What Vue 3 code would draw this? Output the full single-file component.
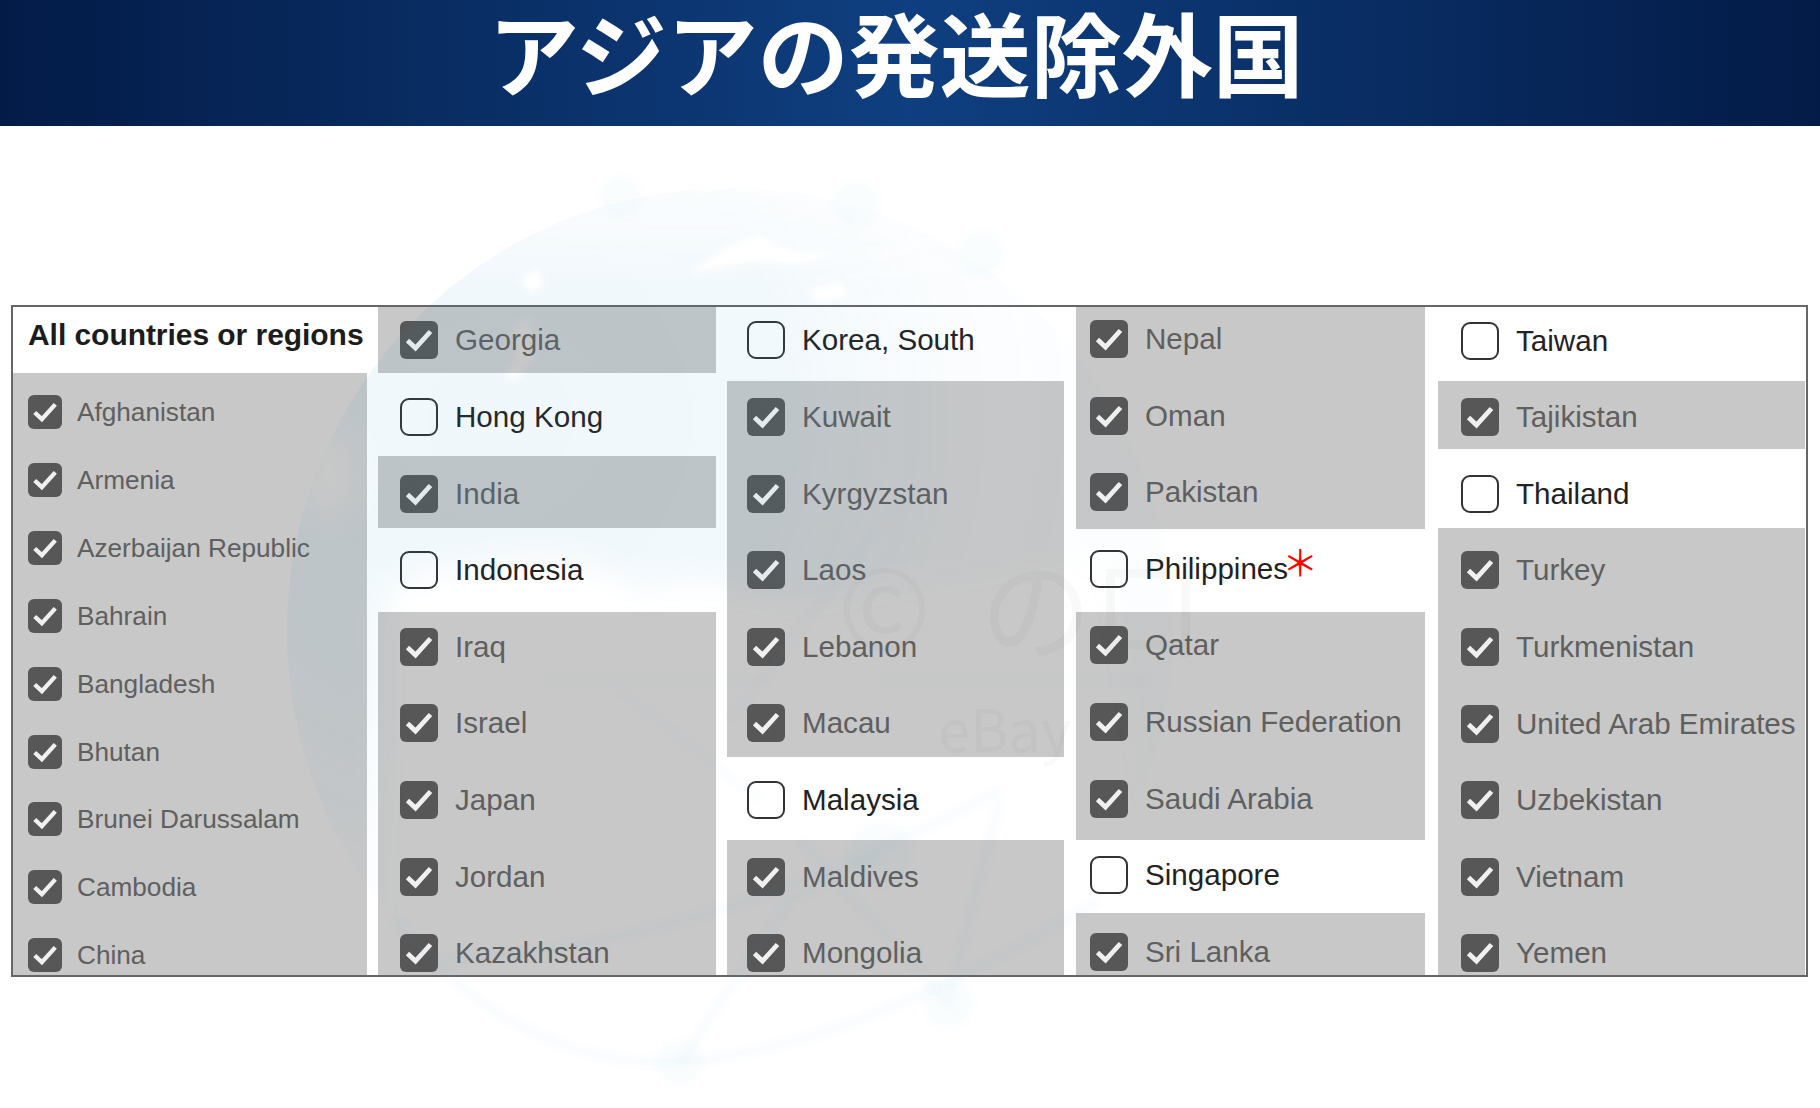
<script setup>
// 行の帯(白/グレー)は列ごとに高さが違うので end で下端を持つ
const TOP = 307

const buildRows = (col) => {
    let prevEnd = col.top ?? TOP
    return col.items.map((item, i) => {
        const center = col.first + col.step * i
        const end = Math.round(item.end ?? center + col.step / 2)
        const row = {
            name: item.name,
            open: !!item.open,
            star: !!item.star,
            height: end - prevEnd,
            pad: Math.round(center - col.box / 2) - prevEnd,
        }
        prevEnd = end
        return row
    })
}

const names = (str) => str.split(',').map(name => ({name}))

const columns = [
    {
        cls: 'col-1', first: 412, step: 67.9, box: 34, top: 373,
        items: names('Afghanistan,Armenia,Azerbaijan Republic,Bahrain,Bangladesh,Bhutan,Brunei Darussalam,Cambodia,China'),
    },
    {
        cls: 'col-2', first: 340.4, step: 76.6, box: 38,
        items: [
            {name: 'Georgia', end: 373},
            {name: 'Hong Kong', end: 456, open: true},
            {name: 'India', end: 528},
            {name: 'Indonesia', end: 612, open: true},
            ...names('Iraq,Israel,Japan,Jordan,Kazakhstan'),
        ],
    },
    {
        cls: 'col-3', first: 340.4, step: 76.6, box: 38,
        items: [
            {name: 'Korea, South', end: 381, open: true},
            ...names('Kuwait,Kyrgyzstan,Laos,Lebanon'),
            {name: 'Macau', end: 757},
            {name: 'Malaysia', end: 840, open: true},
            ...names('Maldives,Mongolia'),
        ],
    },
    {
        cls: 'col-4', first: 339, step: 76.6, box: 38,
        items: [
            ...names('Nepal,Oman'),
            {name: 'Pakistan', end: 529},
            {name: 'Philippines', end: 612, open: true, star: true},
            ...names('Qatar,Russian Federation'),
            {name: 'Saudi Arabia', end: 840},
            {name: 'Singapore', end: 913, open: true},
            {name: 'Sri Lanka'},
        ],
    },
    {
        cls: 'col-5', first: 340.6, step: 76.6, box: 38,
        items: [
            {name: 'Taiwan', end: 381, open: true},
            {name: 'Tajikistan', end: 449},
            {name: 'Thailand', end: 528, open: true},
            ...names('Turkey,Turkmenistan,United Arab Emirates,Uzbekistan,Vietnam,Yemen'),
        ],
    },
].map(col => ({...col, rows: buildRows(col)}))
</script>

<template>
    <div class="page">
        <header class="banner">
            <h1>アジアの発送除外国</h1>
        </header>

        <div class="table">
            <div v-for="col in columns" :key="col.cls" class="col" :class="col.cls">
                <div v-if="col.cls === 'col-1'" class="head">All countries or regions</div>
                <div
                    v-for="row in col.rows"
                    :key="row.name"
                    class="row"
                    :class="{open: row.open}"
                    :style="{height: row.height + 'px', paddingTop: row.pad + 'px'}"
                >
                    <span class="box">
                        <svg v-if="!row.open" viewBox="0 0 38 38">
                            <polyline points="7.5,19.5 15.5,27 30.5,10.5" fill="none" stroke="#f0f0f0" stroke-width="4.8" />
                        </svg>
                    </span>
                    <span class="label">{{ row.name }}<span v-if="row.star" class="star">＊</span></span>
                </div>
            </div>
        </div>

        <!-- 透かしの地球儀 -->
        <svg class="watermark" viewBox="0 0 1820 1108">
            <defs>
                <radialGradient id="sea" gradientUnits="userSpaceOnUse" cx="500" cy="420" r="600">
                    <stop offset="0" stop-color="#379bd4" stop-opacity=".075" />
                    <stop offset=".5" stop-color="#379bd4" stop-opacity=".065" />
                    <stop offset=".75" stop-color="#379bd4" stop-opacity=".025" />
                    <stop offset="1" stop-color="#379bd4" stop-opacity=".01" />
                </radialGradient>
                <linearGradient id="fade" gradientUnits="userSpaceOnUse" x1="0" y1="185" x2="0" y2="285">
                    <stop offset="0" stop-color="#000" stop-opacity=".65" />
                    <stop offset="1" stop-color="#000" stop-opacity="0" />
                </linearGradient>
                <filter id="soft"><feGaussianBlur stdDeviation="3" /></filter>
                <filter id="softer"><feGaussianBlur stdDeviation="14" /></filter>
                <mask id="land" maskUnits="userSpaceOnUse" x="0" y="0" width="1820" height="1108">
                    <rect width="1820" height="1108" fill="#fff" />
                    <rect y="185" width="1820" height="100" fill="url(#fade)" />
                    <g fill="#000" filter="url(#softer)">
                        <path d="M380 620 Q400 560 470 570 Q560 540 640 590 Q700 570 780 600 L1100 560 L1200 1108 L380 1108 Z" />
                        <ellipse cx="330" cy="475" rx="26" ry="44" />
                    </g>
                    <g fill="#000" filter="url(#soft)">
                        <path d="M690 275 Q730 240 760 235 Q800 262 840 250 Q810 268 770 262 Q730 262 690 275 Z" />
                        <path d="M520 280 l18 -12 6 16 -12 10 Z M515 325 l14 -8 6 40 -20 24 -10 -6 12 -20 Z" />
                        <path d="M810 290 l30 -8 10 14 -34 6 Z" />
                    </g>
                </mask>
            </defs>
            <g mask="url(#land)">
                <circle cx="730" cy="631" r="443" fill="url(#sea)" />
            </g>
            <g fill="#379bd4" fill-opacity=".018" filter="url(#soft)">
                <circle cx="621" cy="197" r="22" />
                <circle cx="856" cy="204" r="24" />
                <circle cx="981" cy="254" r="24" />
                <circle cx="680" cy="1063" r="24" />
                <circle cx="948" cy="1003" r="26" />
                <circle cx="880" cy="855" r="34" />
            </g>
            <g fill="none" stroke="#379bd4" stroke-opacity=".028" stroke-width="9" filter="url(#soft)">
                <path d="M395 920 Q520 1070 680 1062 Q850 1050 1100 900" />
                <path d="M680 1062 L790 900 L880 855" />
                <path d="M800 840 L948 1003 L1000 800" />
                <path d="M440 960 Q700 950 1000 790" />
                <path d="M540 680 L770 680 M880 680 L1150 680" stroke-width="5" />
                <path d="M730 720 L900 500 M760 800 L620 690" stroke-width="6" />
            </g>
            <g fill="#505a60" fill-opacity=".035" font-family="'Noto Sans CJK JP', sans-serif">
                <text x="838" y="650" font-size="112">©</text>
                <text x="980" y="652" font-size="112">の口</text>
                <text x="938" y="752" font-size="58">eBay</text>
            </g>
        </svg>
    </div>
</template>

<style scoped>
.page {
    position: relative;
    width: 1820px;
    height: 1108px;
    overflow: hidden;
    background: #fff;
    font-family: "Liberation Sans", Arial, sans-serif;
}

.banner {
    height: 126px;
    padding-right: 28px;
    box-sizing: border-box;
    overflow: hidden;
    background: linear-gradient(90deg, #031b47 0%, #0f3f80 50%, #031b47 100%);
    text-align: center;
}

.banner h1 {
    margin: 0;
    font-family: "Noto Sans CJK JP", sans-serif;
    font-size: 91px;
    font-weight: 700;
    line-height: 100px;
    color: #fff;
}

.table {
    display: flex;
    box-sizing: border-box;
    width: 1797px;
    height: 672px;
    margin: 179px 0 0 11px;
    border: 2px solid #666;
    overflow: hidden;
}

.col {
    flex: none;
    display: flex;
    flex-direction: column;
}

.col-1 { width: 354px; }
.col-2 { width: 338px; margin-left: 11px; }
.col-3 { width: 337px; margin-left: 11px; }
.col-4 { width: 349px; margin-left: 12px; }
.col-5 { width: 367px; margin-left: 13px; }

.head {
    flex: none;
    height: 66px;
    padding: 10px 0 0 15px;
    box-sizing: border-box;
    font-size: 30px;
    font-weight: 700;
    line-height: 36px;
    letter-spacing: -.05px;
    color: #1c1c1c;
    white-space: nowrap;
}

.row {
    flex: none;
    display: flex;
    align-items: flex-start;
    box-sizing: border-box;
    padding-left: 22px;
    background: #c8c8c8;
    font-size: 29.6px;
    line-height: 38px;
    color: #5f5f5f;
    white-space: nowrap;
}

.row.open {
    background: transparent;
    color: #222;
}

.box {
    flex: none;
    width: 38px;
    height: 38px;
    margin-right: 17px;
    box-sizing: border-box;
    border-radius: 6px;
    background: #575757;
}

.box svg {
    display: block;
    width: 100%;
    height: 100%;
}

.open .box {
    border: 2px solid #333;
    border-radius: 9px;
    background: #fff;
}

.col-1 .row {
    padding-left: 15px;
    font-size: 26.2px;
    line-height: 34px;
}

.col-1 .box {
    width: 34px;
    height: 34px;
    margin-right: 15px;
}

.col-3 .row { padding-left: 20px; }
.col-4 .row { padding-left: 14px; }
.col-5 .row { padding-left: 23px; }

.star {
    margin: 0 -6px;
    font-family: "Noto Sans CJK JP", sans-serif;
    font-size: 36px;
    line-height: 0;
    color: #f00;
    vertical-align: 2px;
}

.watermark {
    position: absolute;
    left: 0;
    top: 0;
    width: 1820px;
    height: 1108px;
    pointer-events: none;
}
</style>

<style>
body {
    background: #fff;
}
</style>
